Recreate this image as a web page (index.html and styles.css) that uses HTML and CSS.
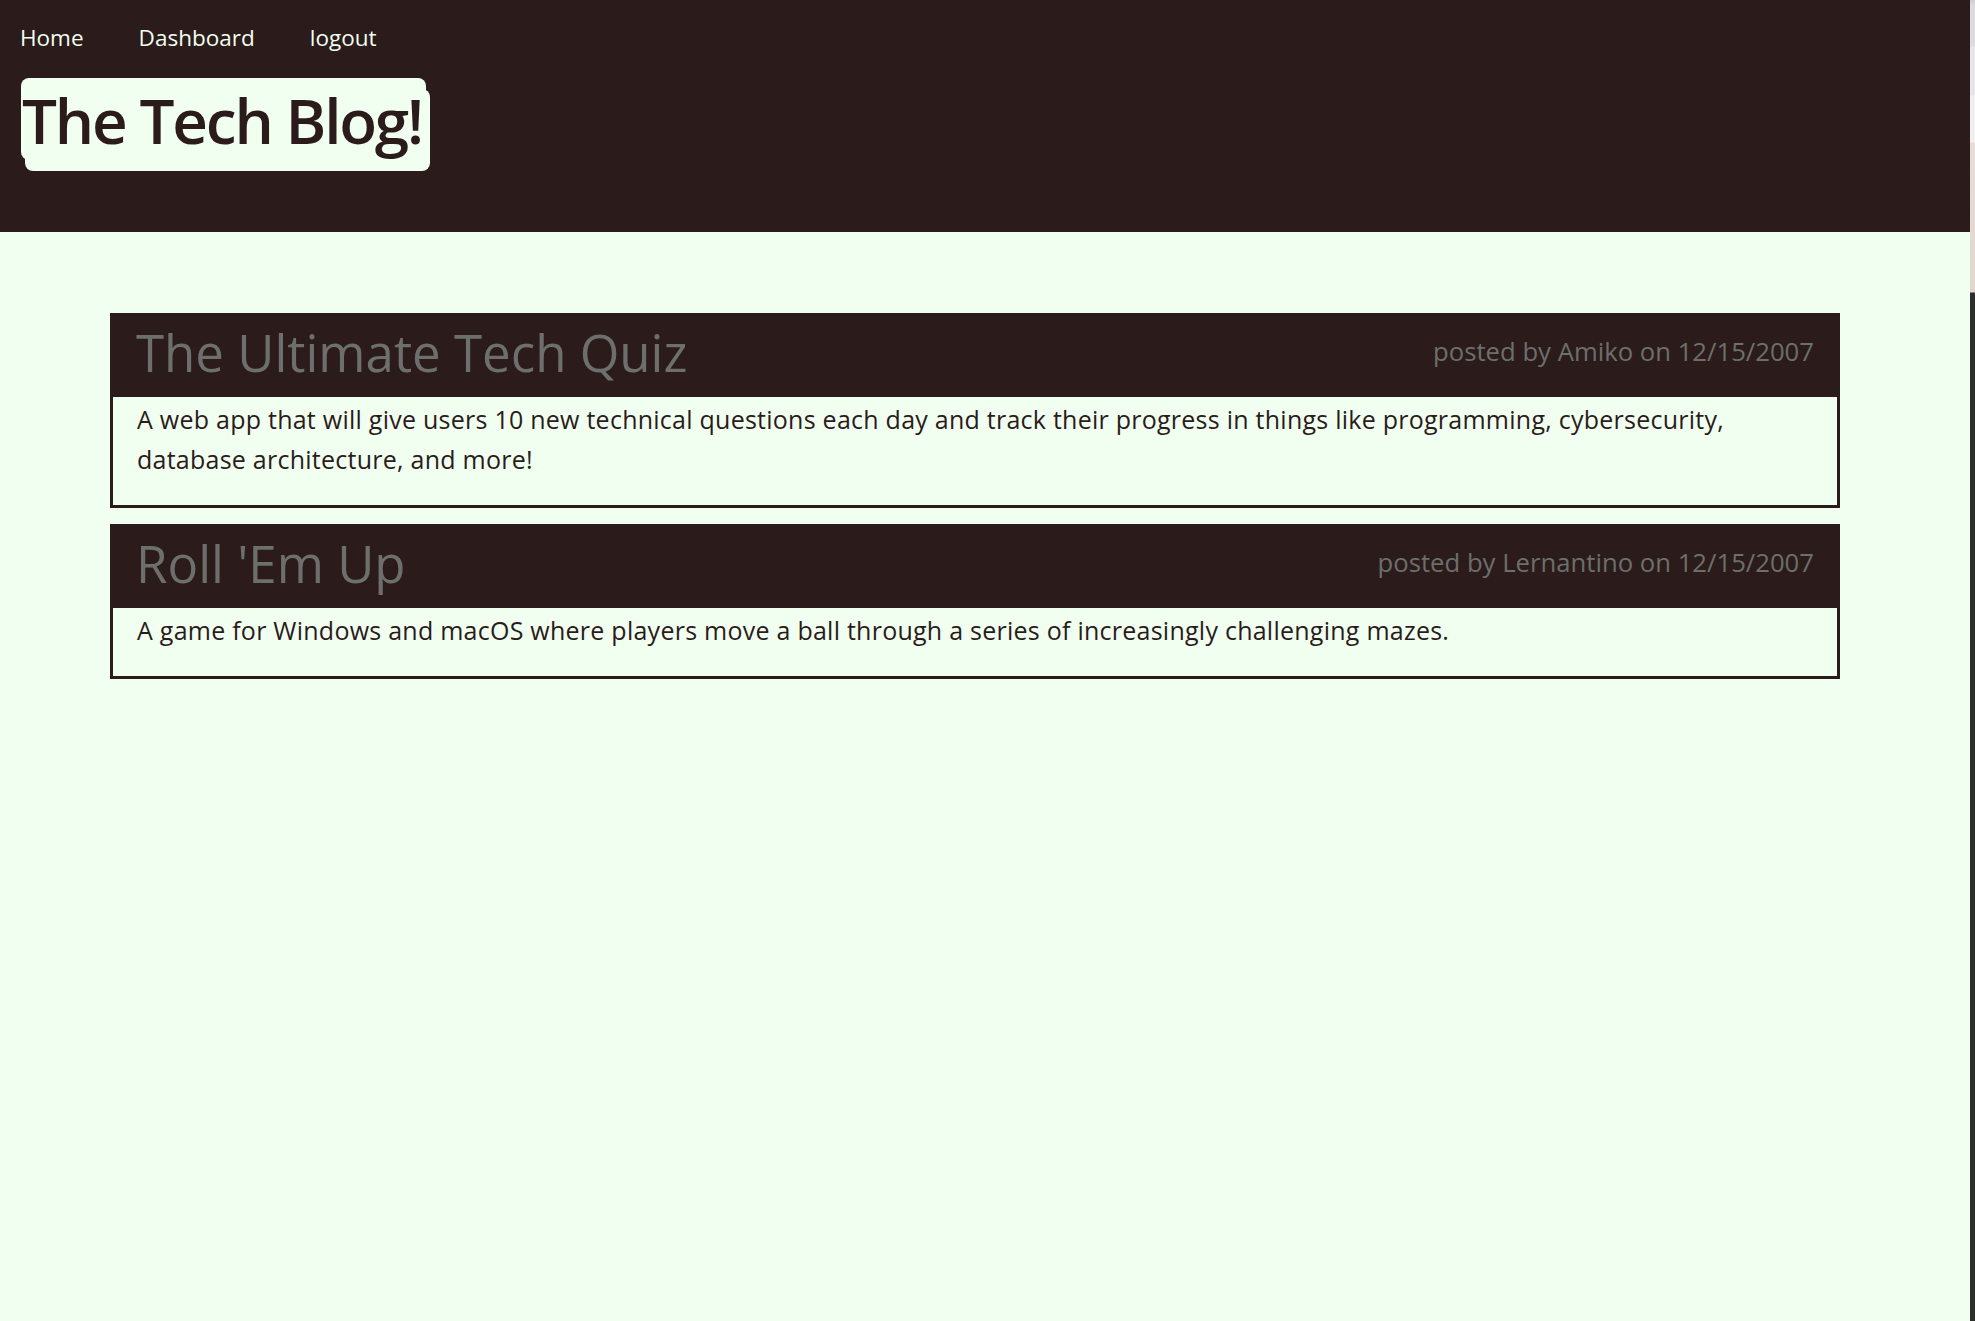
FILE: index.html
```html
<!DOCTYPE html>
<html lang="en">
<head>
<meta charset="utf-8">
<title>The Tech Blog!</title>
<link rel="stylesheet" href="styles.css">
</head>
<body>
<div class="app">
  <div class="page">
    <header class="site-header">
      <nav class="nav">
        <a href="#">Home</a>
        <a href="#">Dashboard</a>
        <a href="#">logout</a>
      </nav>
      <h1 class="brand">The Tech Blog!</h1>
    </header>
    <main class="posts">
      <article class="post">
        <div class="post-head">
          <h2 class="post-title">The Ultimate Tech Quiz</h2>
          <span class="post-meta">posted by Amiko on 12/15/2007</span>
        </div>
        <p class="post-body">A web app that will give users 10 new technical questions each day and track their progress in things like programming, cybersecurity, database architecture, and more!</p>
      </article>
      <article class="post">
        <div class="post-head">
          <h2 class="post-title">Roll 'Em Up</h2>
          <span class="post-meta">posted by Lernantino on 12/15/2007</span>
        </div>
        <p class="post-body">A game for Windows and macOS where players move a ball through a series of increasingly challenging mazes.</p>
      </article>
    </main>
  </div>
  <div class="edge-strip"></div>
</div>
</body>
</html>
```

FILE: styles.css
```css
html, body {
  margin: 0;
  height: 100%;
}

body {
  background: #f0fff0;
  font-family: "Open Sans", "Noto Sans", sans-serif;
  color: #2b1b1b;
}

.app {
  display: flex;
  min-height: 100vh;
}

.page {
  flex: 1;
  min-width: 0;
}

.edge-strip {
  width: 5px;
  background: linear-gradient(to bottom,
    #cfcfd3 0, #dcdce0 6px, #dcdce0 46px, #e6e6ea 47px, #e6e6ea 95px,
    #f0f0f2 96px, #f0f0f2 142px, #e8ddd7 143px, #e2d6cf 292px,
    #2e2e2e 293px, #2e2e2e 100%);
}

.site-header {
  background: #2b1b1b;
  height: 232px;
  box-sizing: border-box;
  padding: 22px 0 0 20px;
}

.nav {
  display: flex;
  gap: 55px;
  font-size: 22.5px;
  line-height: 32px;
}

.nav a {
  color: #f0fff0;
  text-decoration: none;
}

.brand {
  display: block;
  width: 405px;
  box-sizing: border-box;
  margin: 24px 0 0 1px;
  padding: 2px 0 0 1px;
  background: #f0fff0;
  color: #2b1b1b;
  border-radius: 8px;
  box-shadow: 4px 11px 0 #f0fff0;
  font-size: 62px;
  font-weight: 600;
  line-height: 80px;
  letter-spacing: -2.2px;
  white-space: nowrap;
}

.posts {
  width: 1730px;
  margin: 81px 0 0 110px;
  display: flex;
  flex-direction: column;
  gap: 16px;
}

.post {
  border: 3px solid #2b1b1b;
}

.post-head {
  background: #2b1b1b;
  height: 81px;
  display: flex;
  justify-content: space-between;
  align-items: flex-start;
  padding: 0 23px;
}

.post-title {
  margin: 4px 0 0;
  font-size: 51px;
  font-weight: 400;
  line-height: 64px;
  color: #6c6f6b;
}

.post-meta {
  margin-top: 18px;
  font-size: 25.7px;
  font-weight: 400;
  line-height: 36px;
  color: #6c6f6b;
}

.post-body {
  margin: 0;
  padding: 2px 23px 26px 24px;
  font-size: 25px;
  letter-spacing: 0.25px;
  line-height: 40px;
  color: #2b1b1b;
}
```
